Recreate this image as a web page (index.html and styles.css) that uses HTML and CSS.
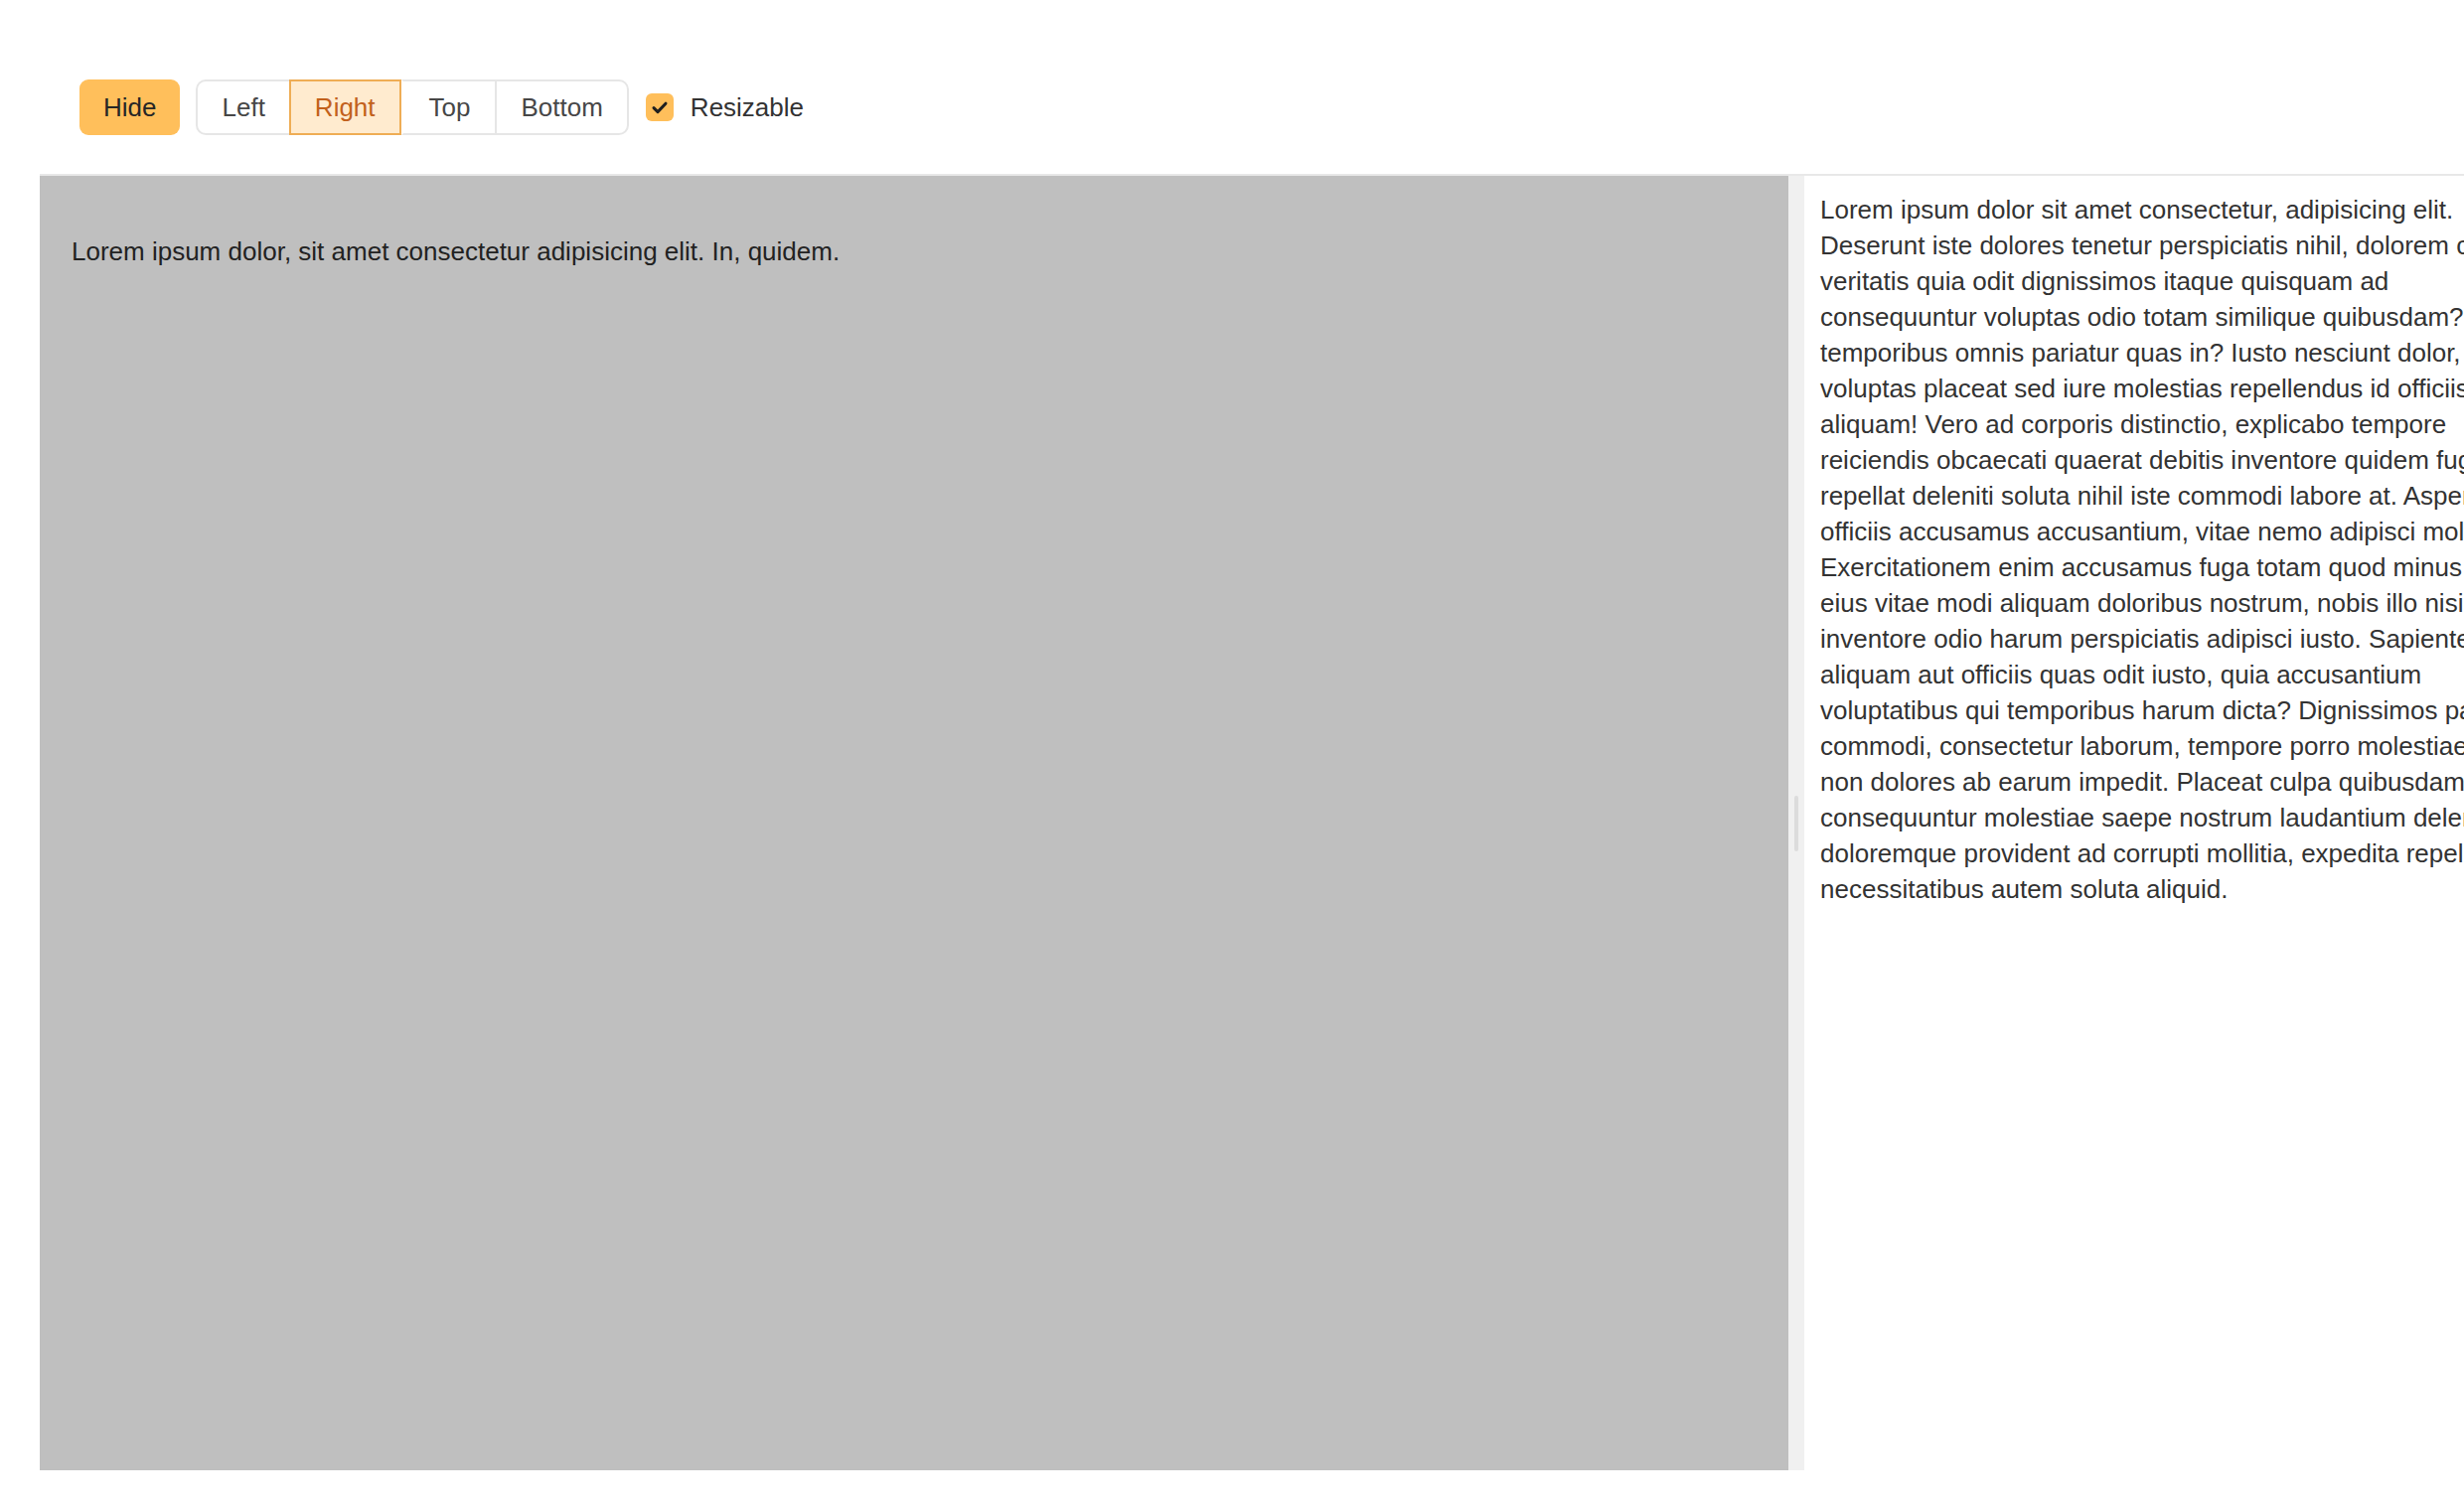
FILE: index.html
```html
<!DOCTYPE html>
<html lang="en">
<head>
<meta charset="utf-8">
<title>Drawer demo</title>
<link rel="stylesheet" href="styles.css">
</head>
<body>
<div class="app">
  <div class="layout">
    <div class="toolbar">
      <button class="btn-primary">Hide</button>
      <div class="segmented">
        <button class="seg seg-first">Left</button>
        <button class="seg seg-active">Right</button>
        <button class="seg seg-after-active">Top</button>
        <button class="seg seg-last">Bottom</button>
      </div>
      <label class="check">
        <span class="check-box">
          <svg viewBox="0 0 28 28" width="28" height="28"><path d="M8 14.6 L12 18.6 L20 10.2" fill="none" stroke="#1f1f1f" stroke-width="3" stroke-linecap="round" stroke-linejoin="round"/></svg>
        </span>
        <span class="check-label">Resizable</span>
      </label>
    </div>
    <div class="main">
      <div class="content">
        <p>Lorem ipsum dolor, sit amet consectetur adipisicing elit. In, quidem.</p>
      </div>
      <div class="splitter"><span class="handle"></span></div>
      <div class="drawer">
        <div class="drawer-text">Lorem ipsum dolor sit amet consectetur, adipisicing elit. Deserunt iste dolores tenetur perspiciatis nihil, dolorem cum veritatis quia odit dignissimos itaque quisquam ad consequuntur voluptas odio totam similique quibusdam? temporibus omnis pariatur quas in? Iusto nesciunt dolor, voluptas placeat sed iure molestias repellendus id officiis aliquam! Vero ad corporis distinctio, explicabo tempore reiciendis obcaecati quaerat debitis inventore quidem fuga repellat deleniti soluta nihil iste commodi labore at. Aspernatur officiis accusamus accusantium, vitae nemo adipisci molestias. Exercitationem enim accusamus fuga totam quod minus quas eius vitae modi aliquam doloribus nostrum, nobis illo nisi inventore odio harum perspiciatis adipisci iusto. Sapiente aliquam aut officiis quas odit iusto, quia accusantium voluptatibus qui temporibus harum dicta? Dignissimos pariatur commodi, consectetur laborum, tempore porro molestiae eum non dolores ab earum impedit. Placeat culpa quibusdam consequuntur molestiae saepe nostrum laudantium deleniti doloremque provident ad corrupti mollitia, expedita repellat necessitatibus autem soluta aliquid.</div>
      </div>
    </div>
  </div>
</div>
</body>
</html>
```
FILE: styles.css
```css
html, body {
  margin: 0;
  padding: 0;
  overflow: hidden;
  background: #ffffff;
}
body {
  font-family: "Liberation Sans", Arial, sans-serif;
  font-size: 26px;
  line-height: 36px;
  color: #333333;
}
.app {
  box-sizing: border-box;
  height: 1520px;
  padding: 40px;
}
.layout {
  display: flex;
  flex-direction: column;
  height: 100%;
  width: max-content;
}
.toolbar {
  display: flex;
  align-items: center;
  padding: 40px 40px 39px 40px;
  border-bottom: 2px solid #e8e8e8;
}
button {
  font-family: inherit;
  font-size: 26px;
  margin: 0;
  cursor: pointer;
}
.btn-primary {
  height: 56px;
  border: none;
  border-radius: 9px;
  background: #ffbf5b;
  color: #262626;
  padding: 0 24px;
}
.segmented {
  display: flex;
  margin-left: 16px;
  height: 56px;
}
.seg {
  box-sizing: border-box;
  height: 56px;
  background: #ffffff;
  color: #474747;
  padding: 0 24px;
  border: 2px solid #e6e6e6;
  border-right: none;
}
.seg-first {
  border-radius: 10px 0 0 10px;
}
.seg-last {
  border-right: 2px solid #e6e6e6;
  border-radius: 0 10px 10px 0;
}
.seg-active {
  background: #ffebcf;
  color: #c2611c;
  border: 2px solid #efad55;
}
.seg-after-active {
  border-left: 2px solid transparent;
  padding: 0 25px 0 26px;
}
.check {
  display: flex;
  align-items: center;
  margin-left: 17px;
}
.check-box {
  width: 28px;
  height: 28px;
  border-radius: 6px;
  background: #ffbf5b;
  display: flex;
  align-items: center;
  justify-content: center;
}
.check-label {
  margin-left: 17px;
  color: #333333;
}
.main {
  display: flex;
  flex: 1;
  min-height: 0;
}
.content {
  width: 1760px;
  box-sizing: border-box;
  padding: 32px;
  background: #bfbfbf;
  color: #222222;
}
.content p {
  margin: 1em 0;
}
.splitter {
  width: 16px;
  background: #f0f0f0;
  display: flex;
  align-items: center;
  justify-content: center;
}
.handle {
  width: 4px;
  height: 56px;
  border-radius: 2px;
  background: #dcdcdc;
}
.drawer {
  width: 760px;
  box-sizing: border-box;
  padding: 16px;
  background: #ffffff;
}
.drawer-text {
  color: #333333;
}
```
